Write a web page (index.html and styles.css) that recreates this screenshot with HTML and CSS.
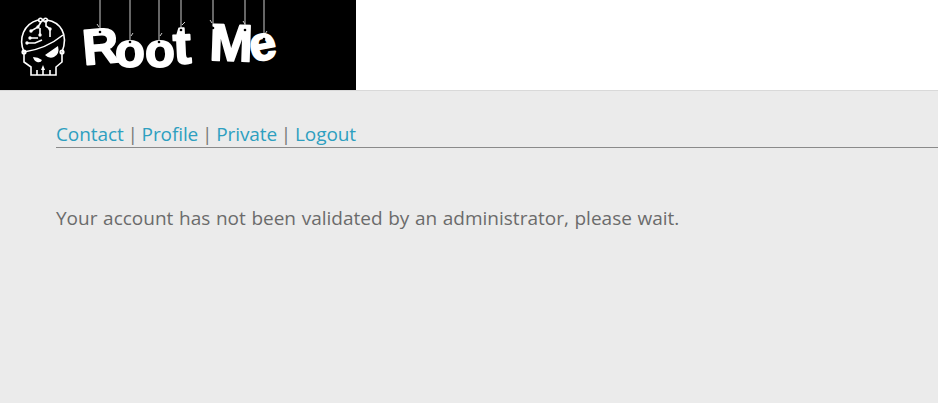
FILE: index.html
```html
<!DOCTYPE html>
<html lang="en">
<head>
<meta charset="utf-8">
<title>Root Me</title>
<link rel="stylesheet" href="styles.css">
</head>
<body>
<header class="site-header">
  <a class="logo" href="#" aria-label="Root Me">
    <svg class="logo-art" width="356" height="90" viewBox="0 0 356 90">
      <rect width="356" height="90" fill="#000"/>
      <g class="skull" fill="none" stroke="#fff" stroke-width="1.6">
        <path d="M24 52 C18 38 24 24 38 20 M47 20 C60 22 69 34 62 52"/>
        <path d="M24 52 C38 50 52 44 63 35"/>
        <path d="M24 52 V62 L31 67 V75 H56 V67 L62 62 V52"/>
        <path d="M37 75 V70 M43 75 V70 M50 75 V70"/>
        <path d="M46 20 V26 L50 29 V37 M41 22 L38 27 L31 31 M40 28 V35 M27 43 H35 L42 40 M30 38 H38"/>
        <circle cx="40.500" cy="20" r="1.800"/>
        <circle cx="45.500" cy="20" r="1.800"/>
        <circle cx="24" cy="52" r="1.800"/>
        <circle cx="62" cy="52" r="1.800"/>
      </g>
      <g fill="#fff">
        <path d="M33 57 Q38 57 42 60 Q41 63 37 62 Q34 61 33 57Z M45 55 L58 46 Q60 54 54 57 Q49 59 45 55Z M41 70 L43 65 L45 70Z"/>
        <circle cx="31" cy="31" r="1.700"/><circle cx="38" cy="27" r="1.700"/><circle cx="40" cy="35" r="1.700"/>
        <circle cx="50" cy="29" r="1.700"/><circle cx="27" cy="43" r="1.700"/><circle cx="30" cy="38" r="1.700"/>
      </g>
      <g class="strings" stroke="#ccc" stroke-width="1" fill="none">
        <path d="M100 0 V31 M97 24 L99 27 M130 0 V40 M133 33 L131 36 M159 0 V41 M162 33 L160 36 M181 0 V28 M185 22 L182 25 M213 0 V26 M210 20 L212 23 M245 0 V28 M243 21 L245 24 M264 0 V37 M267 31 L265 34"/>
      </g>
      <g class="logo-letters" fill="#fff" stroke="#fff" stroke-width="1.800" stroke-linejoin="round">
        <text transform="translate(84 65) rotate(-5)" font-size="50">R</text>
        <text transform="translate(115 66.500)" font-size="49">o</text>
        <text transform="translate(145 66.500)" font-size="49">o</text>
        <text transform="translate(174 64) rotate(-3)" font-size="54">t</text>
        <text transform="translate(209 60) rotate(2)" font-size="52">M</text>
        <text transform="translate(252 62) rotate(-10)" font-size="48">e</text>
      </g>
      <g fill="#000">
        <circle cx="100" cy="32" r="1.300"/><circle cx="130" cy="42" r="1.300"/><circle cx="159" cy="42" r="1.300"/>
        <circle cx="181" cy="30" r="1.300"/><circle cx="213" cy="28" r="1.300"/><circle cx="245" cy="30" r="1.300"/>
        <circle cx="264" cy="39" r="1.300"/>
      </g>
    </svg>
  </a>
</header>
<main class="content">
  <nav class="top-nav">
    <a href="#">Contact</a> <span class="sep">|</span>
    <a href="#">Profile</a> <span class="sep">|</span>
    <a href="#">Private</a> <span class="sep">|</span>
    <a href="#">Logout</a>
  </nav>
  <p class="message">Your account has not been validated by an administrator, please wait.</p>
</main>
</body>
</html>
```
FILE: styles.css
```css
html, body {
  margin: 0;
  height: 100%;
}
body {
  background: #ebebeb;
  font-family: "Open Sans", "Noto Sans", sans-serif;
  overflow: hidden;
}
.site-header {
  background: #fff;
  height: 90px;
  border-bottom: 1px solid #d9d9d9;
}
.logo, .logo-art {
  display: block;
}
.logo {
  width: 356px;
}
.logo-letters {
  font-family: "Liberation Sans", Arial, sans-serif;
  font-weight: 700;
}
.content {
  padding: 30px 0 0 56px;
}
.top-nav {
  font-size: 19px;
  line-height: 26px;
  word-spacing: -1px;
  letter-spacing: -0.100px;
  color: #777;
  border-bottom: 1px solid #8a8a8a;
  height: 26px;
}
.top-nav a {
  color: #2e9fc0;
  text-decoration: none;
}
.message {
  margin: 57px 0 0;
  font-size: 19px;
  line-height: 26px;
  word-spacing: 0.700px;
  color: #6b6b6b;
}
```
